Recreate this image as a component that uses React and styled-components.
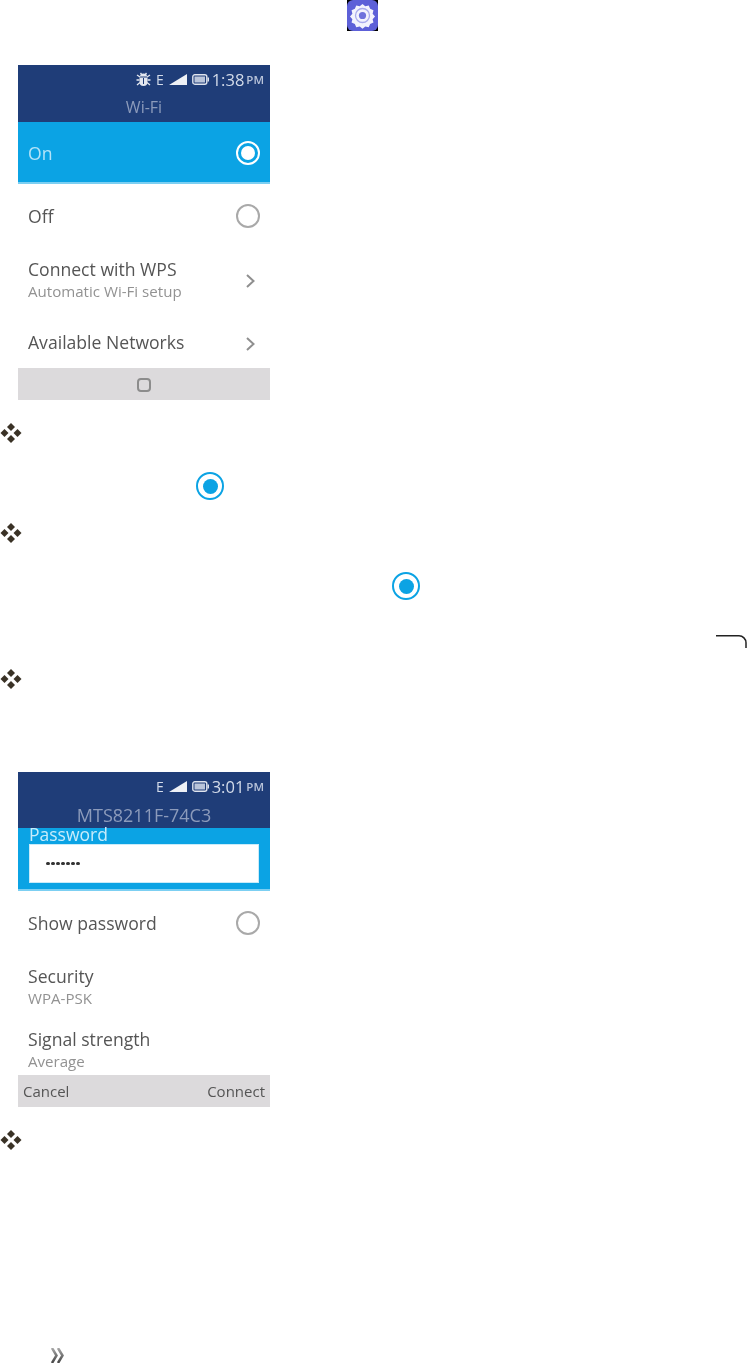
import styled, { createGlobalStyle } from 'styled-components';

const GlobalStyle = createGlobalStyle`
    html, body {
        margin: 0;
        padding: 0;
        background: #fff;
    }
    * {
        box-sizing: border-box;
    }
`

const Page = styled.div`
    width: 747px;
    height: 1363px;
    overflow: hidden;
    display: flex;
    flex-direction: column;
    font-family: "Open Sans", "Noto Sans", sans-serif;
`

const Row = styled.div`
    display: flex;
    flex: none;
    justify-content: ${p => p.$end ? 'flex-end' : 'flex-start'};
    margin-top: ${p => p.$top || 0}px;
    padding-left: ${p => p.$left || 0}px;
`

const Phone = styled.div`
    flex: none;
    width: 252px;
    height: 335px;
    margin-top: ${p => p.$top}px;
    margin-left: 18px;
    display: flex;
    flex-direction: column;
    overflow: hidden;
    filter: blur(0.6px);
`

const Header = styled.div`
    height: ${p => p.$height || 57}px;
    flex: none;
    background: #1f3d78;
`

const StatusBar = styled.div`
    height: 28px;
    padding: 0 6px 0 0;
    display: flex;
    align-items: center;
    justify-content: flex-end;
    color: #d4dcea;
    font-size: 16.5px;
`

const Net = styled.span`
    font-size: 14px;
    margin: 0 5px 0 4px;
`

const Clock = styled.span`
    margin-left: 3px;
`

const Meridiem = styled.span`
    font-size: 11.5px;
    font-weight: 600;
    margin-left: 2px;
    color: #b9c4da;
`

const Title = styled.div`
    height: 28px;
    text-align: center;
    color: #8c9bbb;
    font-size: ${p => p.$size || 16}px;
    line-height: ${p => p.$line || 28}px;
`

const OptionRow = styled.div`
    flex: none;
    height: ${p => p.$height}px;
    padding: ${p => p.$pad || 0}px 10px 0;
    display: flex;
    align-items: center;
    justify-content: space-between;
    background: ${p => p.$active ? '#0ba3e4' : '#fff'};
    color: ${p => p.$active ? '#b4e3f8' : '#555'};
    border-bottom: ${p => p.$active ? '2px solid #7ccff2' : 'none'};
    font-size: 17.6px;
`

const Texts = styled.div`
    display: flex;
    flex-direction: column;
`

const Name = styled.div`
    line-height: 23px;
`

const Sub = styled.div`
    font-size: 15.1px;
    line-height: 21px;
    color: #929292;
`

const PasswordBox = styled.div`
    flex: none;
    height: 63px;
    padding: 0 11px;
    background: #0ba3e4;
    border-bottom: 2px solid #7ccff2;
`

const PasswordLabel = styled.div`
    height: 12px;
    line-height: 12px;
    color: #c8ecfb;
    font-size: 17.5px;
`

const PasswordInput = styled.div`
    height: 39px;
    width: 230px;
    margin-top: 4px;
    padding-left: 16px;
    background: #fff;
    border: 1px solid #c9ebf9;
    display: flex;
    align-items: center;
    gap: 1.5px;
`

const Dot = styled.span`
    width: 3.5px;
    height: 3.5px;
    border-radius: 50%;
    background: #333;
`

const BottomBar = styled.div`
    flex: none;
    height: 32px;
    padding: 0 5px;
    background: #dcdadc;
    display: flex;
    align-items: center;
    justify-content: ${p => p.$center ? 'center' : 'space-between'};
    color: #555;
    font-size: 15px;
`

const HomeKey = styled.div`
    width: 14px;
    height: 14px;
    margin-top: 2px;
    border: 2px solid #8c8c8c;
    border-radius: 4px;
`

const PhoneRadio = styled.div`
    width: 24px;
    height: 24px;
    border-radius: 50%;
    border: 2px solid ${p => p.$on ? '#fff' : '#a9a9a9'};
    display: flex;
    align-items: center;
    justify-content: center;
    &::after {
        content: '';
        display: ${p => p.$on ? 'block' : 'none'};
        width: 14px;
        height: 14px;
        border-radius: 50%;
        background: #fff;
    }
`

const BlueRadio = styled.div`
    width: 28px;
    height: 28px;
    border-radius: 50%;
    border: 2.5px solid #0ba3e4;
    display: flex;
    align-items: center;
    justify-content: center;
    filter: blur(0.3px);
    &::after {
        content: '';
        width: 15px;
        height: 15px;
        border-radius: 50%;
        background: #0ba3e4;
    }
`

const ChevronSlot = styled.div`
    display: flex;
    margin: ${p => p.$down}px 4px 0 0;
`

const GearIcon = () => (
    <svg width="31" height="31" viewBox="0 0 31 31">
        <rect width="31" height="31" fill="#000" />
        <rect width="31" height="31" rx="6" fill="#5d60d8" />
        <path
            fill="#f3f3fd"
            d="M15.5 3.5l3 2.6 3.8-.9 1.5 3.6 3.6 1.5-.9 3.8 2.6 3-2.6 3 .9 3.6-3.6 1.5-1.5 3.6-3.8-.9-3 2.6-3-2.6-3.8.9-1.5-3.6-3.6-1.5.9-3.6-2.6-3 2.6-3-.9-3.8 3.6-1.5 1.5-3.6 3.8.9z"
            transform="translate(0 -.5) translate(15.5 15.5) scale(.92) translate(-15.5 -15.5)"
        />
        <circle cx="15.5" cy="15.5" r="7" fill="none" stroke="#a9abec" strokeWidth="1.3" />
        <circle cx="15.5" cy="15.5" r="3.6" fill="#6f72dc" />
    </svg>
)

const BulletIcon = () => (
    <svg width="22" height="22" viewBox="0 0 22 22" fill="#3a3226" style={{ filter: 'blur(0.35px)' }}>
        <path d="M11 1l4 4-4 4-4-4z" />
        <path d="M11 13l4 4-4 4-4-4z" />
        <path d="M4.5 7l4 4-4 4-4-4z" />
        <path d="M17.5 7l4 4-4 4-4-4z" />
    </svg>
)

const BugIcon = () => (
    <svg width="15" height="14" viewBox="0 0 15 14" fill="#e4e8f0" style={{ marginRight: 1 }}>
        <path d="M4 4.5a3.5 3 0 0 1 7 0zM3.5 5.5h8V10a4 4 0 0 1-8 0z" />
        <path d="M1 3l3 2M14 3l-3 2M0.5 8h3M14.5 8h-3M1 13l3-2.5M14 13l-3-2.5M4.5 1L6 3M10.5 1L9 3" stroke="#e4e8f0" strokeWidth="1.3" />
        <path d="M7.5 6v6" stroke="#1f3d78" strokeWidth="1" />
    </svg>
)

const SignalIcon = () => (
    <svg width="18" height="11" viewBox="0 0 18 11">
        <path d="M0 11L18 0v11z" fill="#eef1f6" />
    </svg>
)

const BatteryIcon = () => (
    <svg width="17" height="11" viewBox="0 0 17 11" style={{ marginLeft: 5 }}>
        <rect x="0.8" y="0.8" width="14" height="9.4" rx="2" fill="none" stroke="#dfe4ee" strokeWidth="1.4" />
        <rect x="2.5" y="2.5" width="10.5" height="6" fill="#b9c4da" />
        <rect x="15.5" y="3.5" width="1.5" height="4" fill="#dfe4ee" />
    </svg>
)

const Chevron = ({ down }) => (
    <ChevronSlot $down={down}>
        <svg width="11" height="16" viewBox="0 0 11 16" fill="none" stroke="#8f8f8f" strokeWidth="2">
            <path d="M2 2l6.5 6-6.5 6" />
        </svg>
    </ChevronSlot>
)

const CornerMark = () => (
    <svg width="31" height="13" viewBox="0 0 31 13" fill="none" stroke="#222" strokeWidth="1.5">
        <path d="M0 .8h23a7 7 0 0 1 7 7V13" />
    </svg>
)

const DoubleChevron = () => (
    <svg width="14" height="15" viewBox="0 0 14 15" fill="none" strokeWidth="2.5">
        <defs>
            <linearGradient id="fade" x1="0" y1="0" x2="0" y2="1">
                <stop offset="0" stopColor="#a8a8a8" />
                <stop offset="1" stopColor="#444" />
            </linearGradient>
        </defs>
        <path stroke="url(#fade)" d="M1 0l4.5 7.5L1 15M7 0l4.5 7.5L7 15" />
    </svg>
)

const Bullet = ({ top }) => (
    <Row $top={top}>
        <BulletIcon />
    </Row>
)

const App = () => {
    return (
        <Page>
            <GlobalStyle />
            <Row $left={347}>
                <GearIcon />
            </Row>

            <Phone $top={34}>
                <Header>
                    <StatusBar>
                        <BugIcon />
                        <Net>E</Net>
                        <SignalIcon />
                        <BatteryIcon />
                        <Clock>1:38</Clock>
                        <Meridiem>PM</Meridiem>
                    </StatusBar>
                    <Title>Wi-Fi</Title>
                </Header>
                <OptionRow $height={62} $pad={1} $active>
                    On
                    <PhoneRadio $on />
                </OptionRow>
                <OptionRow $height={64}>
                    Off
                    <PhoneRadio />
                </OptionRow>
                <OptionRow $height={64}>
                    <Texts>
                        <Name>Connect with WPS</Name>
                        <Sub>Automatic Wi-Fi setup</Sub>
                    </Texts>
                    <Chevron down={2} />
                </OptionRow>
                <OptionRow $height={56} $pad={4}>
                    Available Networks
                    <Chevron down={3} />
                </OptionRow>
                <BottomBar $center>
                    <HomeKey />
                </BottomBar>
            </Phone>

            <Bullet top={22} />
            <Row $top={28} $left={196}>
                <BlueRadio />
            </Row>
            <Bullet top={22} />
            <Row $top={28} $left={392}>
                <BlueRadio />
            </Row>
            <Row $top={35} $end>
                <CornerMark />
            </Row>
            <Bullet top={20} />

            <Phone $top={82}>
                <Header $height={56}>
                    <StatusBar>
                        <Net>E</Net>
                        <SignalIcon />
                        <BatteryIcon />
                        <Clock>3:01</Clock>
                        <Meridiem>PM</Meridiem>
                    </StatusBar>
                    <Title $size={18} $line={30}>MTS8211F-74C3</Title>
                </Header>
                <PasswordBox>
                    <PasswordLabel>Password</PasswordLabel>
                    <PasswordInput>
                        {[0, 1, 2, 3, 4, 5, 6].map(i => <Dot key={i} />)}
                    </PasswordInput>
                </PasswordBox>
                <OptionRow $height={64}>
                    Show password
                    <PhoneRadio />
                </OptionRow>
                <OptionRow $height={63}>
                    <Texts>
                        <Name>Security</Name>
                        <Sub>WPA-PSK</Sub>
                    </Texts>
                </OptionRow>
                <OptionRow $height={57} $pad={6}>
                    <Texts>
                        <Name>Signal strength</Name>
                        <Sub>Average</Sub>
                    </Texts>
                </OptionRow>
                <BottomBar>
                    <span>Cancel</span>
                    <span>Connect</span>
                </BottomBar>
            </Phone>

            <Bullet top={22} />
            <Row $top={197} $left={51}>
                <DoubleChevron />
            </Row>
        </Page>
    )
}

export default App;
